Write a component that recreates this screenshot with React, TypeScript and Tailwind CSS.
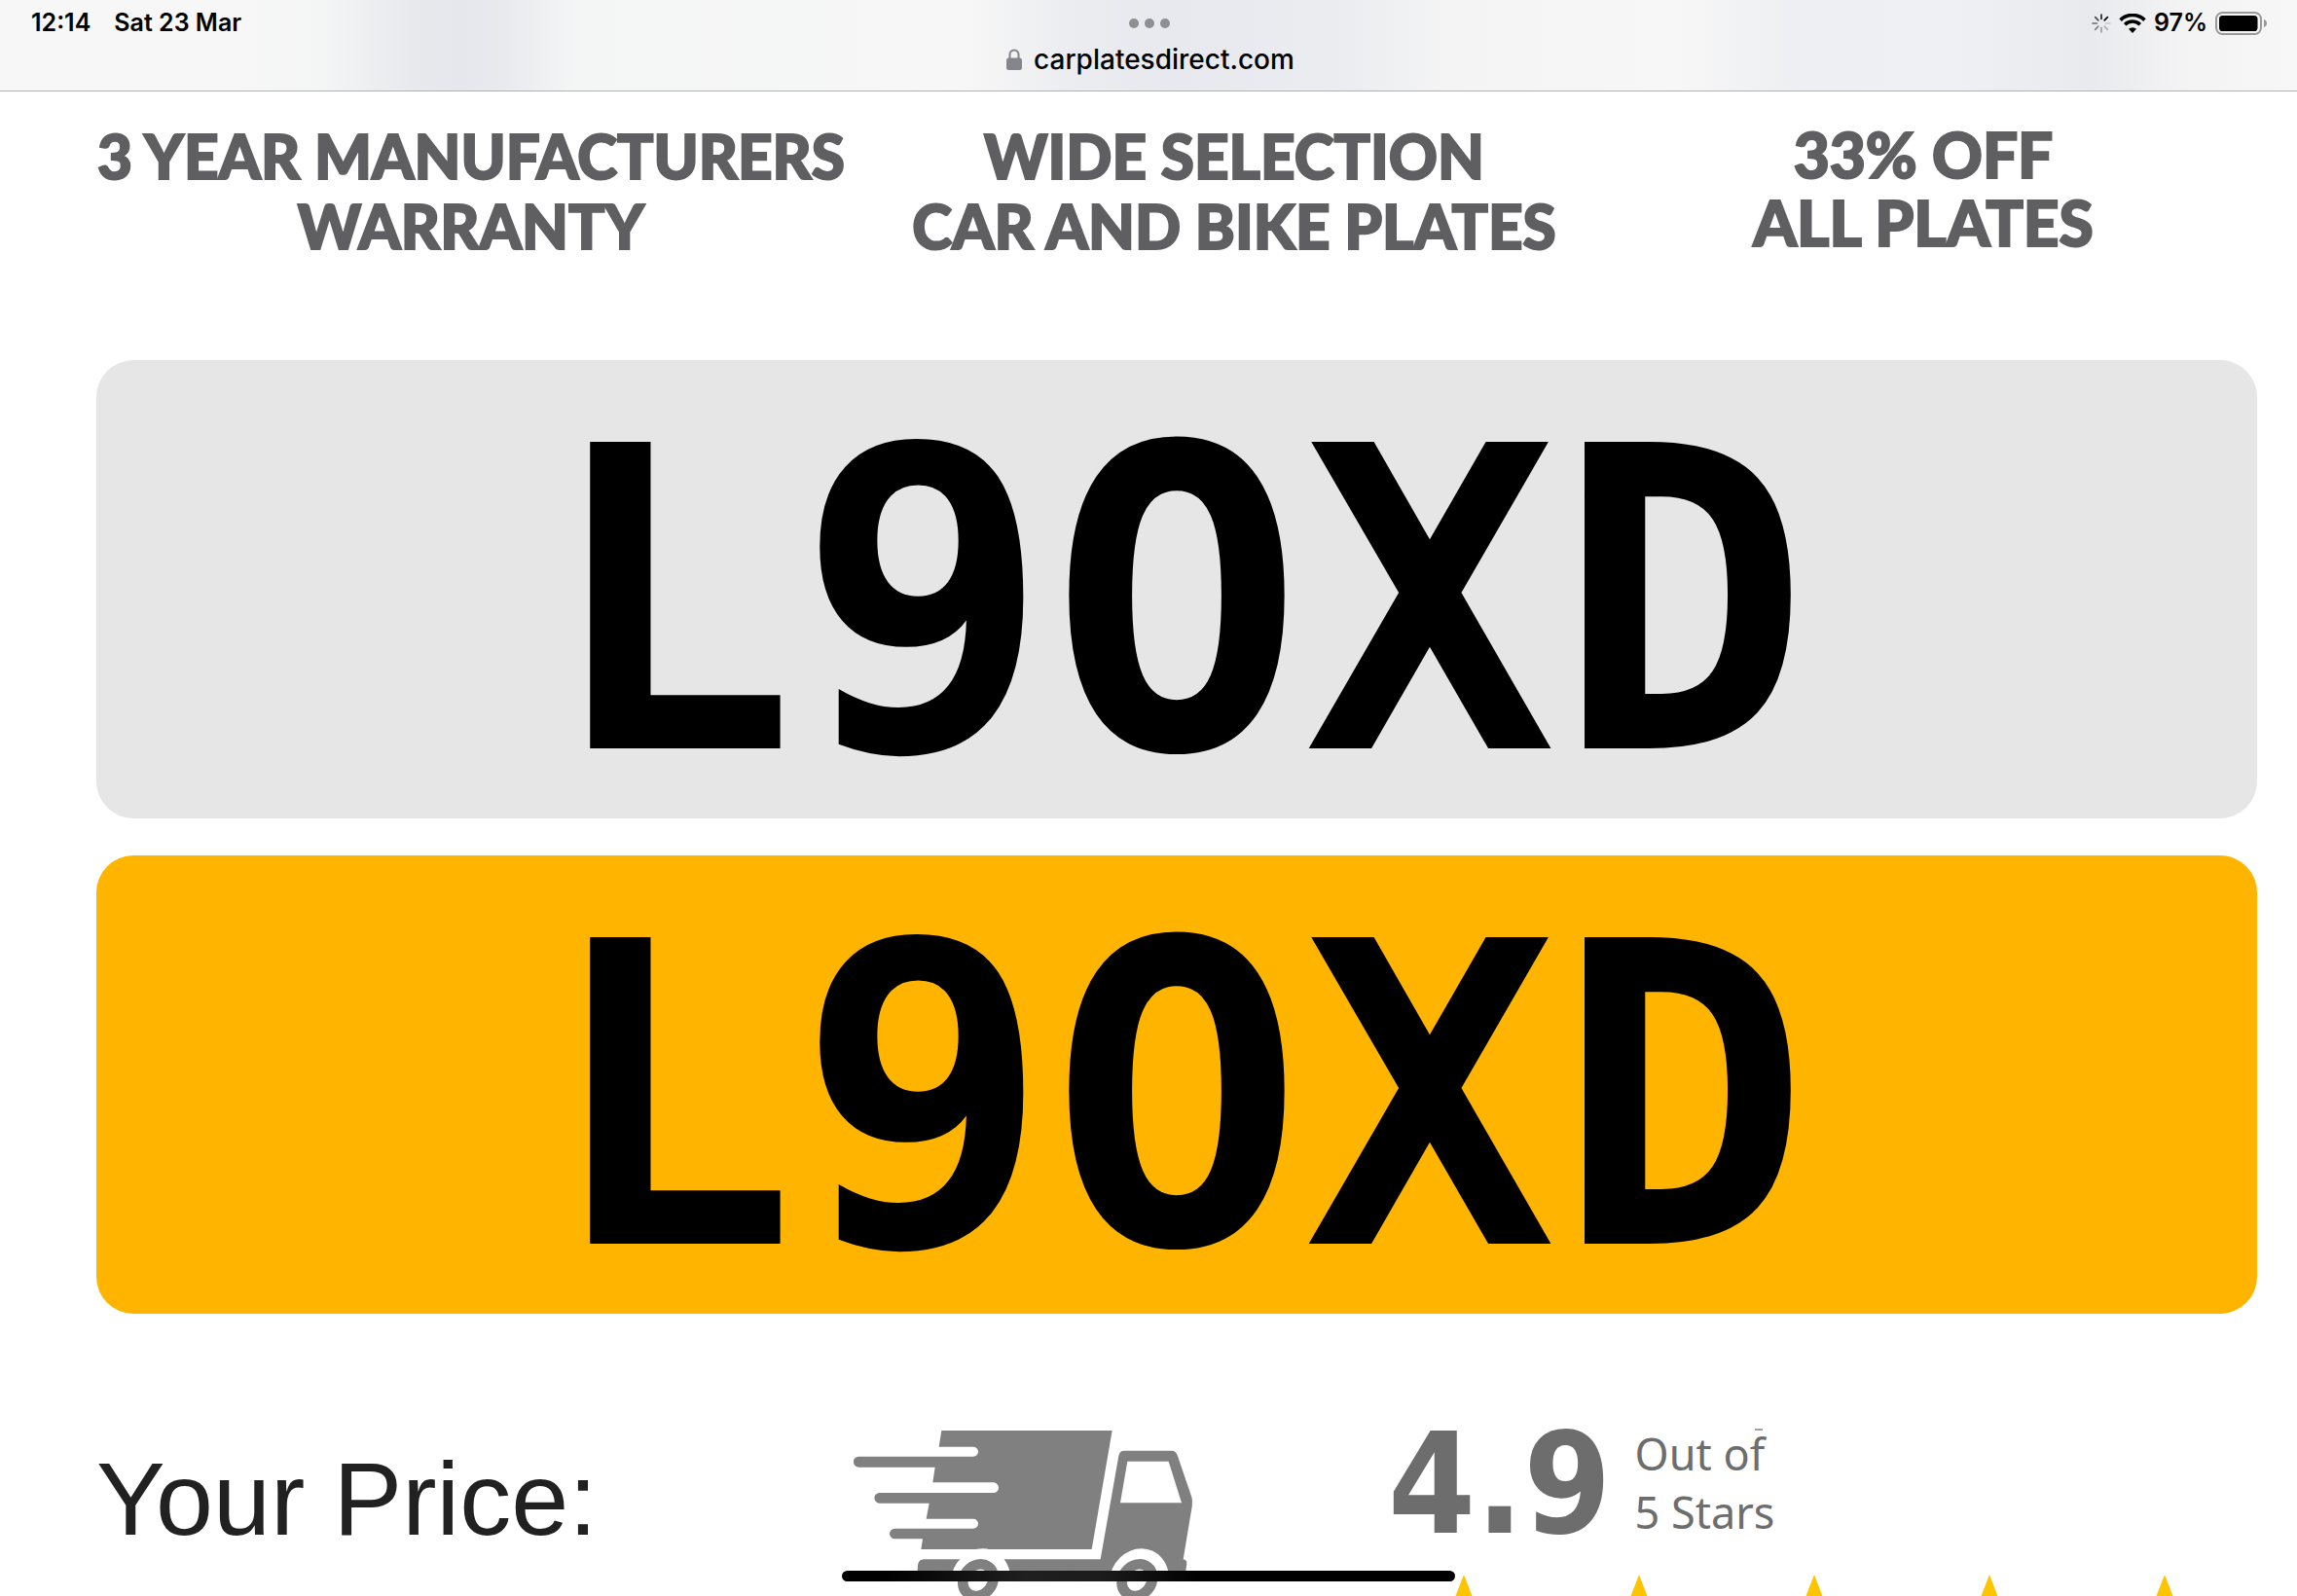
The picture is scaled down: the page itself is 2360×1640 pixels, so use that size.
import type { ReactNode } from "react";

const REGISTRATION = "L9OXD";

const spinnerRays = [
  { angle: 0, opacity: 0.9 },
  { angle: 45, opacity: 1 },
  { angle: 90, opacity: 0.15 },
  { angle: 135, opacity: 0.25 },
  { angle: 180, opacity: 0.35 },
  { angle: 225, opacity: 0.45 },
  { angle: 270, opacity: 0.55 },
  { angle: 315, opacity: 0.7 },
];

function SpinnerIcon() {
  return (
    <svg viewBox="0 0 20 20" className="size-5" aria-hidden="true">
      {spinnerRays.map((ray) => (
        <line
          key={ray.angle}
          x1="10"
          y1="1"
          x2="10"
          y2="5.5"
          stroke="black"
          strokeWidth="1.6"
          strokeLinecap="round"
          opacity={ray.opacity}
          transform={`rotate(${ray.angle} 10 10)`}
        />
      ))}
    </svg>
  );
}

function WifiIcon() {
  return (
    <svg viewBox="0 0 28 20" className="h-5 w-7" fill="none" stroke="black" aria-hidden="true">
      <path d="M1.6 6.6a17.6 17.6 0 0 1 24.8 0" strokeWidth="3.6" />
      <path d="M6.2 11.3a11 11 0 0 1 15.6 0" strokeWidth="3.6" />
      <path d="M14 20l-4-4.2a5.8 5.8 0 0 1 8 0z" fill="black" stroke="none" />
    </svg>
  );
}

function BatteryIcon() {
  return (
    <svg viewBox="0 0 54 24" className="h-6 w-[54px]" aria-hidden="true">
      <rect x="1" y="1" width="46" height="22" rx="6.5" fill="none" stroke="#999" strokeWidth="2" />
      <rect x="4" y="4" width="39.5" height="16" rx="3.6" />
      <path d="M50 8c2 .6 3 2.200 3 4s-1 3.400-3 4z" fill="#999" />
    </svg>
  );
}

function LockIcon() {
  return (
    <svg viewBox="0 0 16 22" className="h-[22px] w-4" aria-hidden="true">
      <path d="M3.500 11V6a4.500 4.500 0 0 1 9 0v5" fill="none" stroke="#86858b" strokeWidth="2" />
      <rect y="9.500" width="16" height="12.500" rx="2.500" fill="#86858b" />
    </svg>
  );
}

function TruckIcon() {
  return (
    <svg viewBox="111 90 1044 540" className="h-[180px] w-[348px]" role="img" aria-label="Delivery">
      <g fill="#808080">
        <path d="M382 90H908L845 456H319L324 424H238a16 16 0 0 1 0-32H480a15 15 0 0 0 0-30H335L344 314H191a16 16 0 0 1 0-32H542a16 16 0 0 0 0-32H355L362 203H127a16 16 0 0 1 0-33H480a15 15 0 0 0 0-30H374Z" />
        <path d="M328 487H872L928 168Q931 152 946 152H1092Q1104 152 1109 166L1153 295Q1156 305 1154 325L1127 487Q1138 488 1138 500L1131 550H306L309 505Q311 487 328 487Z" />
      </g>
      <path d="M955 185H1082L1122 313H933Z" fill="white" />
      <g fill="white">
        <ellipse cx="502" cy="552" rx="90" ry="100" transform="rotate(25 502 552)" />
        <ellipse cx="991" cy="552" rx="90" ry="100" transform="rotate(25 991 552)" />
      </g>
      <g fill="none" stroke="#808080" strokeWidth="32">
        <ellipse cx="495" cy="551" rx="44" ry="52" transform="rotate(38 495 551)" />
        <ellipse cx="985" cy="551" rx="44" ry="52" transform="rotate(38 985 551)" />
      </g>
    </svg>
  );
}

function StarIcon() {
  return (
    <svg viewBox="0 0 160 152" className="h-[152px] w-40 shrink-0" aria-hidden="true">
      <polygon
        points="80,0 102,57 160,58 114,94 130,152 80,118 30,152 46,94 0,58 58,57"
        fill="#ffc400"
      />
    </svg>
  );
}

function StatusBar() {
  return (
    <header className="relative flex h-[94px] shrink-0 flex-col border-b border-[#b0b0b2] bg-[#f7f7f7] bg-[linear-gradient(90deg,transparent_10%,#f4f5f5_14%,#e8e9ed_18%,#e6e7ec_20%,#e9eaee_22%,#f4f5f5_25%,#f7f7f7_42%,#ebecf0_47%,#e8e9ee_51%,#ebecf0_58%,#f4f4f5_63%,#f7f7f7_73%,#eeeff2_78%,#eff0f3_85%,#e9eaee_91%,#f3f3f4_95%,#f7f7f7_100%)] font-[Inter,sans-serif] text-black">
      <div className="grid h-12 grid-cols-3 items-center pr-[30px] pl-8 text-[25px] font-semibold">
        <div className="flex gap-6">
          <time>12:14</time>
          <span>Sat 23 Mar</span>
        </div>
        <button type="button" aria-label="Window options" className="flex gap-1.5 justify-self-center">
          <span className="size-2.5 rounded-full bg-[#8e8e93]" />
          <span className="size-2.5 rounded-full bg-[#8e8e93]" />
          <span className="size-2.5 rounded-full bg-[#8e8e93]" />
        </button>
        <div className="flex items-center gap-2 justify-self-end">
          <SpinnerIcon />
          <WifiIcon />
          <span>97%</span>
          <BatteryIcon />
        </div>
      </div>
      <a
        href="#top"
        className="flex h-[26px] items-center gap-3 self-center pl-1 text-[28px] leading-[26px] font-medium"
      >
        <LockIcon />
        carplatesdirect.com
      </a>
    </header>
  );
}

function Feature({ children, className = "" }: { children: ReactNode; className?: string }) {
  return (
    <p className={`text-center whitespace-nowrap ${className}`}>{children}</p>
  );
}

function Plate({ className }: { className: string }) {
  return (
    <div
      className={`flex h-[471px] items-center justify-center rounded-[38px] pt-7 font-['DejaVu_Sans_Mono',monospace] text-[432px] leading-none font-bold text-black ${className}`}
    >
      {REGISTRATION}
    </div>
  );
}

export default function App() {
  return (
    <div className="relative flex h-screen flex-col overflow-hidden bg-white">
      <StatusBar />

      <main id="top" className="flex flex-col pr-[41px] pl-[99px]">
        <section className="grid h-[276px] grid-cols-[804fr_730fr_686fr] pt-[30px] font-[Lato,sans-serif] text-[62px] leading-[72px] font-black text-[#5f5f61] [-webkit-text-stroke:2px_#5f5f61]">
          <Feature className="pr-[34px]">
            3 YEAR MANUFACTURERS
            <br />
            WARRANTY
          </Feature>
          <Feature>
            WIDE SELECTION
            <br />
            CAR AND BIKE PLATES
          </Feature>
          <Feature className="text-[64px] leading-[70px]">
            33% OFF
            <br />
            ALL PLATES
          </Feature>
        </section>

        <section className="flex flex-col gap-[38px]" aria-label="Plate preview">
          <Plate className="bg-[#e6e6e6]" />
          <Plate className="bg-[#ffb400]" />
        </section>

        <section className="grid grid-cols-[778fr_547fr_895fr] pt-[120px]">
          <h1 className="pt-2.5 font-['Liberation_Sans',sans-serif] text-[106px] leading-[120px] text-[#212121]">
            Your Price:
          </h1>
          <TruckIcon />
          <div className="text-[#6d6d6d]">
            <div className="flex h-[148px] gap-6 pl-0.5">
              <strong className="font-['DejaVu_Sans_Condensed','DejaVu_Sans',sans-serif] text-[144px] leading-[110px]">
                4.9
              </strong>
              <p className="relative -mt-1.5 font-['Noto_Sans',sans-serif] text-[45px] leading-[60px]">
                Out of
                <br />5 Stars
                <span className="absolute top-1 right-3 h-0.5 w-2 bg-gray-400" />
              </p>
            </div>
            <div className="flex gap-5" role="img" aria-label="4.9 out of 5 stars">
              <StarIcon />
              <StarIcon />
              <StarIcon />
              <StarIcon />
              <StarIcon />
            </div>
          </div>
        </section>
      </main>

      <div className="absolute bottom-[15px] left-1/2 h-[11px] w-[630px] -translate-x-1/2 rounded-full bg-[linear-gradient(90deg,#000_7%,#1f1f1f_30%,#1c1c1c_42%,#000_58%)]" />
    </div>
  );
}
